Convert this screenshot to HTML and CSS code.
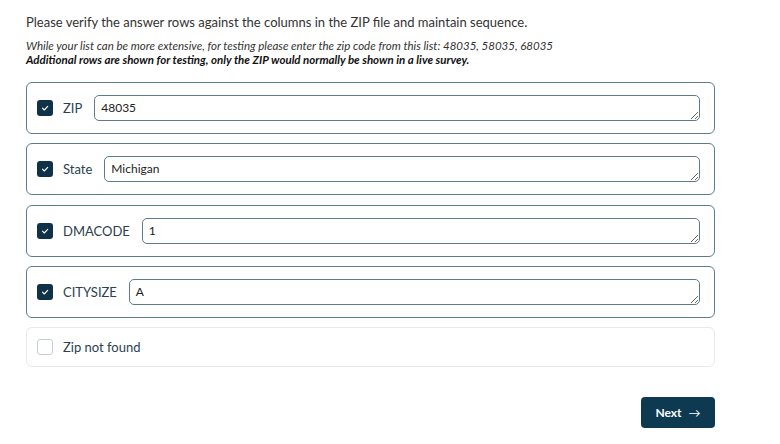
FILE: index.html
```html
<!DOCTYPE html>
<html lang="en">
<head>
    <meta charset="UTF-8">
    <meta name="viewport" content="width=device-width, initial-scale=1.0">
    <title>ZIP verification</title>
    <link rel="stylesheet" href="styles.css">
</head>
<body>

    <div class="survey">
        <p class="question">Please verify the answer rows against the columns in the ZIP file and maintain sequence.</p>
        <p class="note">While your list can be more extensive, for testing please enter the zip code from this list: 48035, 58035, 68035</p>
        <p class="note strong">Additional rows are shown for testing, only the ZIP would normally be shown in a live survey.</p>

        <div class="rows">
            <label class="row checked">
                <span class="box"><svg viewBox="0 0 16 16"><path d="M5.5 8.2l1.8 1.8 3.4-3.6"/></svg></span>
                <span class="name">ZIP</span>
                <textarea rows="1">48035</textarea>
            </label>
            <label class="row checked">
                <span class="box"><svg viewBox="0 0 16 16"><path d="M5.5 8.2l1.8 1.8 3.4-3.6"/></svg></span>
                <span class="name">State</span>
                <textarea rows="1">Michigan</textarea>
            </label>
            <label class="row checked">
                <span class="box"><svg viewBox="0 0 16 16"><path d="M5.5 8.2l1.8 1.8 3.4-3.6"/></svg></span>
                <span class="name">DMACODE</span>
                <textarea rows="1">1</textarea>
            </label>
            <label class="row checked">
                <span class="box"><svg viewBox="0 0 16 16"><path d="M5.5 8.2l1.8 1.8 3.4-3.6"/></svg></span>
                <span class="name">CITYSIZE</span>
                <textarea rows="1">A</textarea>
            </label>
            <label class="row plain">
                <span class="box"></span>
                <span class="name">Zip not found</span>
            </label>
        </div>

        <div class="actions">
            <button type="button" class="next">Next <span class="arrow">&rarr;</span></button>
        </div>
    </div>

</body>
</html>
```

FILE: styles.css
```css
body {
    font-family: Lato, 'Noto Sans', sans-serif;
    margin: 0;
    padding: 0;
    background: #fff;
    color: #333;
}

.survey {
    width: 689px;
    padding: 13px 0 0 26px;
}

.question {
    margin: 0 0 8px;
    font-size: 13px;
    line-height: 18px;
    color: #333;
}

.note {
    margin: 0;
    font-size: 11.5px;
    font-style: italic;
    line-height: 14px;
    color: #333;
}

.note.strong {
    font-weight: bold;
    color: #111;
}

.rows {
    display: flex;
    flex-direction: column;
    gap: 9px;
    margin-top: 15px;
}

.row {
    display: flex;
    align-items: center;
    gap: 10px;
    padding: 12px 14px 12px 10px;
    border: 1px solid #5f7b8a;
    border-radius: 6px;
}

.row + .row {
    margin-top: 0.3px;
}

.row.plain {
    border-color: #e6eaed;
    padding-top: 11px;
    padding-bottom: 11px;
}

.box {
    width: 16px;
    height: 16px;
    flex: none;
    box-sizing: border-box;
    border-radius: 3px;
    border: 1.5px solid #c7ced3;
}

.checked .box {
    background: #0f3248;
    border: none;
}

.box svg {
    width: 16px;
    height: 16px;
    display: block;
}

.box path {
    fill: none;
    stroke: #fff;
    stroke-width: 1.1;
    stroke-linecap: round;
    stroke-linejoin: round;
}

.name {
    font-size: 13px;
    color: #2b4150;
    margin-right: 2px;
}

textarea {
    flex: 1;
    height: 26px;
    box-sizing: border-box;
    padding: 5px 6px;
    border: 1px solid #5f7b8a;
    border-radius: 5px;
    font-family: Lato, 'Noto Sans', sans-serif;
    font-size: 12px;
    line-height: 14px;
    color: #222;
    overflow: hidden;
}

.actions {
    display: flex;
    justify-content: flex-end;
    margin-top: 30px;
}

.next {
    background: #0d3a50;
    color: white;
    border: none;
    border-radius: 4px;
    width: 74px;
    height: 31px;
    font-family: Lato, 'Noto Sans', sans-serif;
    font-size: 12px;
    font-weight: bold;
    cursor: pointer;
}

.arrow {
    font-weight: normal;
    margin-left: 4px;
}
```
